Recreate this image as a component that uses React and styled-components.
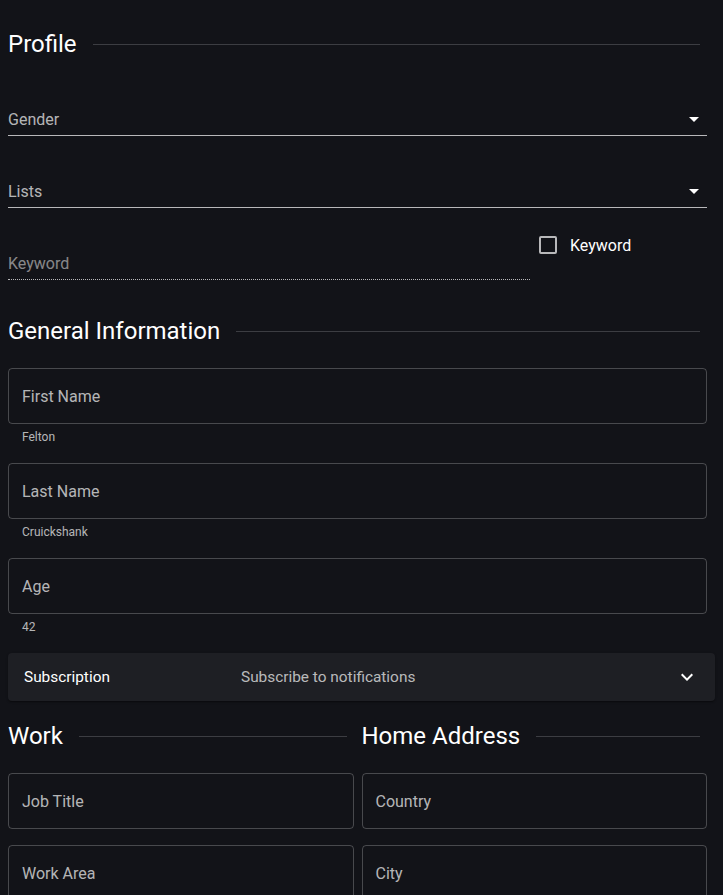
import React from "react";
import styled, { createGlobalStyle } from "styled-components";

const GlobalStyle = createGlobalStyle`
  body {
    margin: 0;
    background: #121318;
    font-family: Roboto, "Liberation Sans", sans-serif;
    color: #fff;
  }
`;

const Page = styled.div`
  padding: 28px 8px 0 8px;
  height: 895px;
  box-sizing: border-box;
  overflow: hidden;
`;

const HeadingRow = styled.div`
  display: flex;
  align-items: center;
  gap: 16px;
  margin-right: ${(p) => p.$right}px;
  margin-top: ${(p) => p.$top || 0}px;
`;

const HeadingText = styled.h2`
  margin: 0;
  font-size: 24px;
  line-height: 32px;
  font-weight: 400;
  color: #fff;
  white-space: nowrap;
`;

const Rule = styled.div`
  flex: 1;
  height: 1px;
  background: #3c3d42;
`;

const SelectBox = styled.div`
  margin-top: ${(p) => p.$top}px;
  margin-right: 8px;
  height: 31px;
  border-bottom: 1px solid rgba(255, 255, 255, 0.7);
  display: flex;
  align-items: center;
  justify-content: space-between;
`;

const FieldLabel = styled.span`
  font-size: 16px;
  line-height: 23px;
  color: ${(p) => (p.$dim ? "rgba(255,255,255,0.5)" : "rgba(255,255,255,0.7)")};
`;

const Caret = styled.div`
  width: 0;
  height: 0;
  margin-right: 8px;
  border-left: 5px solid transparent;
  border-right: 5px solid transparent;
  border-top: 5px solid #fff;
`;

const KeywordRow = styled.div`
  display: flex;
  align-items: flex-start;
  margin-top: 25px;
`;

const DisabledInput = styled.div`
  width: 522px;
  margin-top: 15px;
  height: 31px;
  display: flex;
  align-items: center;
  border-bottom: 1px dotted rgba(255, 255, 255, 0.7);
`;

const CheckLabel = styled.label`
  display: flex;
  align-items: center;
  height: 24px;
  margin-left: 9px;
  font-size: 16px;
  color: #fff;
`;

const CheckSquare = styled.span`
  width: 14px;
  height: 14px;
  border: 2px solid rgba(255, 255, 255, 0.7);
  border-radius: 2px;
  margin-right: 13px;
`;

const FieldWrap = styled.div`
  margin-top: ${(p) => p.$top}px;
  margin-right: ${(p) => (p.$flush ? 0 : 8)}px;
`;

const Outlined = styled.div`
  height: 54px;
  border: 1px solid rgba(255, 255, 255, 0.23);
  border-radius: 4px;
  display: flex;
  align-items: center;
  padding: 0 13px;
`;

const Helper = styled.div`
  margin: 3px 14px 0;
  font-size: 12px;
  line-height: 20px;
  color: rgba(255, 255, 255, 0.7);
`;

const Accordion = styled.div`
  margin-top: 16px;
  height: 48px;
  background: #1e1f24;
  border-radius: 4px;
  box-shadow: 0 2px 1px -1px rgba(0, 0, 0, 0.2), 0 1px 1px rgba(0, 0, 0, 0.14),
    0 1px 3px rgba(0, 0, 0, 0.12);
  display: flex;
  align-items: center;
  padding: 0 16px;
`;

const AccTitle = styled.span`
  width: 217px;
  flex-shrink: 0;
  font-size: 15.4px;
  color: #fff;
`;

const AccSub = styled.span`
  flex: 1;
  font-size: 15.4px;
  color: rgba(255, 255, 255, 0.7);
`;

const Columns = styled.div`
  display: grid;
  grid-template-columns: 1fr 1fr;
  column-gap: 8px;
  margin: 19px 8px 0 0;
`;

const Column = styled.div``;

const SectionTitle = ({ children, top, right = 15 }) => (
  <HeadingRow $top={top} $right={right}>
    <HeadingText>{children}</HeadingText>
    <Rule />
  </HeadingRow>
);

const TextField = ({ label, helper, top, flush }) => (
  <FieldWrap $top={top} $flush={flush}>
    <Outlined>
      <FieldLabel>{label}</FieldLabel>
    </Outlined>
    {helper && <Helper>{helper}</Helper>}
  </FieldWrap>
);

const ExpandIcon = () => (
  <svg width="24" height="24" viewBox="0 0 24 24" fill="#fff">
    <path d="M16.59 8.59 12 13.17 7.41 8.59 6 10l6 6 6-6z" />
  </svg>
);

const App = () => (
  <>
    <GlobalStyle />
    <Page>
      <SectionTitle>Profile</SectionTitle>
      <SelectBox $top={44}>
        <FieldLabel>Gender</FieldLabel>
        <Caret />
      </SelectBox>
      <SelectBox $top={40}>
        <FieldLabel>Lists</FieldLabel>
        <Caret />
      </SelectBox>
      <KeywordRow>
        <DisabledInput>
          <FieldLabel $dim>Keyword</FieldLabel>
        </DisabledInput>
        <CheckLabel>
          <CheckSquare />
          Keyword
        </CheckLabel>
      </KeywordRow>

      <SectionTitle top={35}>General Information</SectionTitle>
      <TextField label="First Name" helper="Felton" top={21} />
      <TextField label="Last Name" helper="Cruickshank" top={16} />
      <TextField label="Age" helper="42" top={16} />

      <Accordion>
        <AccTitle>Subscription</AccTitle>
        <AccSub>Subscribe to notifications</AccSub>
        <ExpandIcon />
      </Accordion>

      <Columns>
        <Column>
          <SectionTitle right={7}>Work</SectionTitle>
          <TextField label="Job Title" top={21} flush />
          <TextField label="Work Area" top={16} flush />
        </Column>
        <Column>
          <SectionTitle right={7}>Home Address</SectionTitle>
          <TextField label="Country" top={21} flush />
          <TextField label="City" top={16} flush />
        </Column>
      </Columns>
    </Page>
  </>
);

export default App;
